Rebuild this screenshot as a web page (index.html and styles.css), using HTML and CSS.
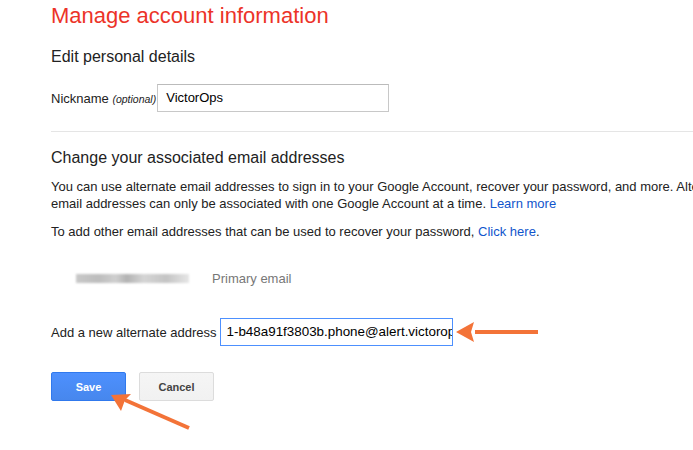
FILE: index.html
```html
<!DOCTYPE html>
<html>
<head>
<meta charset="utf-8">
<link rel="stylesheet" href="styles.css">
</head>
<body>
<div class="page">
  <h1 class="title">Manage account information</h1>
  <h2 class="section-title">Edit personal details</h2>
  <div class="field-row nick-row">
    <label class="label nick-label">Nickname <span class="optional">(optional)</span></label>
    <div class="input nick-input">VictorOps</div>
  </div>
  <div class="divider"></div>
  <h2 class="section-title change-title">Change your associated email addresses</h2>
  <p class="para">You can use alternate email addresses to sign in to your Google Account, recover your password, and more. Alternate<br>email addresses can only be associated with one Google Account at a time. <a class="link">Learn more</a></p>
  <p class="para add-para">To add other email addresses that can be used to recover your password, <a class="link">Click here</a>.</p>
  <div class="primary-row">
    <span class="blurred"></span>
    <span class="primary-label">Primary email</span>
  </div>
  <div class="field-row alt-row">
    <label class="label">Add a new alternate address</label>
    <div class="input alt-input">1-b48a91f3803b.phone@alert.victorops.com</div>
    <svg class="arrow-right" width="86" height="24" viewBox="0 0 86 24"><path d="M20 12 H83" stroke="#f37338" stroke-width="4"/><polygon points="1,12 19,2 16,12 19,22" fill="#f37338"/></svg>
  </div>
  <div class="buttons">
    <button class="btn btn-save">Save</button>
    <button class="btn btn-cancel">Cancel</button>
    <svg class="arrow-save" width="84" height="40" viewBox="0 0 84 40"><path d="M14 6 L78 34" stroke="#f37338" stroke-width="4"/><polygon points="0,1 20,0 14,6 10,17" fill="#f37338"/></svg>
  </div>
</div>
</body>
</html>
```
FILE: styles.css
```css
html, body {
  margin: 0;
  padding: 0;
  overflow: hidden;
  background: #fff;
}
body {
  width: 693px;
  height: 450px;
  font-family: "Liberation Sans", Arial, sans-serif;
  color: #222;
}
.page {
  padding-left: 51px;
  width: 760px;
}
.title {
  margin: 0;
  padding-top: 3px;
  font-size: 22px;
  line-height: 26px;
  font-weight: normal;
  color: #ec3328;
}
.section-title {
  margin: 0;
  padding-top: 18px;
  font-size: 16px;
  line-height: 20px;
  font-weight: normal;
  color: #222;
}
.field-row {
  display: flex;
  align-items: center;
}
.nick-row {
  margin-top: 17px;
}
.label {
  font-size: 13px;
  color: #222;
  margin-right: 3px;
}
.nick-label {
  margin-right: 1px;
}
.optional {
  font-style: italic;
  font-size: 10.5px;
}
.input {
  box-sizing: border-box;
  height: 28px;
  padding: 0 8px;
  font-size: 13px;
  line-height: 26px;
  white-space: nowrap;
  overflow: hidden;
  color: #000;
}
.nick-input {
  width: 232px;
  border: 1px solid #c8c8c8;
  border-top-color: #bbb;
}
.divider {
  margin-top: 19px;
  height: 1px;
  background: #e5e5e5;
}
.change-title {
  padding-top: 16px;
}
.para {
  margin: 0;
  margin-top: 10px;
  font-size: 13px;
  line-height: 17px;
  color: #222;
}
.add-para {
  margin-top: 11px;
}
.link {
  color: #1155cc;
  text-decoration: none;
}
.primary-row {
  display: flex;
  align-items: center;
  margin-top: 28px;
  padding-left: 25px;
  height: 20px;
}
.blurred {
  width: 113px;
  height: 9px;
  background: linear-gradient(90deg, #c8c8c8 0%, #bdbdbd 20%, #cfcfcf 35%, #b3b3b3 45%, #d5d5d5 60%, #c4c4c4 80%, #e6e6e6 100%);
  filter: blur(1px);
  margin-right: 23px;
}
.primary-label {
  font-size: 13px;
  color: #777;
}
.alt-row {
  margin-top: 30px;
}
.alt-input {
  width: 233px;
  border: 1px solid #4d90fe;
  padding: 0 6px;
  font-size: 13.4px;
  text-overflow: clip;
}
.arrow-right {
  margin-left: 2px;
}
.buttons {
  display: flex;
  align-items: flex-start;
  margin-top: 26px;
}
.btn {
  box-sizing: border-box;
  height: 29px;
  width: 75px;
  border-radius: 2px;
  font-family: "Liberation Sans", Arial, sans-serif;
  font-size: 11px;
  font-weight: bold;
  padding: 0;
}
.btn-save {
  background: linear-gradient(#4d90fe, #4787ed);
  border: 1px solid #3079ed;
  color: #fff;
}
.btn-cancel {
  margin-left: 13px;
  background: linear-gradient(#f5f5f5, #f1f1f1);
  border: 1px solid #dcdcdc;
  color: #444;
}
.arrow-save {
  margin-left: -103px;
  margin-top: 22px;
  position: relative;
}
```
